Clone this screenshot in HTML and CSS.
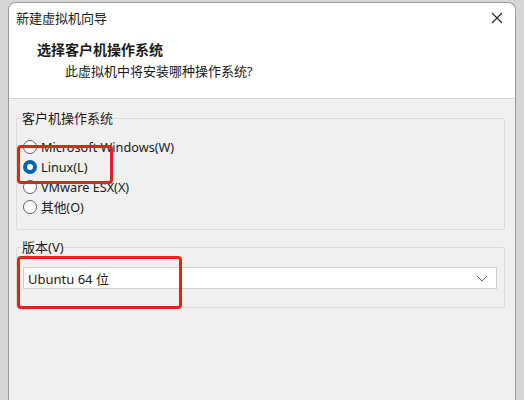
FILE: index.html
```html
<!DOCTYPE html>
<html lang="zh-CN">
<head>
    <meta charset="UTF-8">
    <meta name="viewport" content="width=device-width, initial-scale=1.0">
    <title>新建虚拟机向导</title>
    <link rel="stylesheet" href="styles.css">
</head>
<body>
    <div class="window">
        <div class="header">
            <div class="titlebar">
                <span class="title">新建虚拟机向导</span>
                <svg class="close" width="12" height="12" viewBox="0 0 12 12">
                    <path d="M1 1 L11 11 M11 1 L1 11" stroke="#222" stroke-width="1.1" fill="none"/>
                </svg>
            </div>
            <div class="heading">选择客户机操作系统</div>
            <div class="subheading">此虚拟机中将安装哪种操作系统?</div>
        </div>

        <div class="content">
            <fieldset class="group group-os">
                <legend>客户机操作系统</legend>
                <label class="radio"><span class="dot"></span>Microsoft Windows(W)</label>
                <label class="radio"><span class="dot checked"></span>Linux(L)</label>
                <label class="radio"><span class="dot"></span>VMware ESX(X)</label>
                <label class="radio"><span class="dot"></span>其他(O)</label>
            </fieldset>

            <fieldset class="group group-version">
                <legend>版本(V)</legend>
                <div class="select">
                    <span>Ubuntu 64 位</span>
                    <svg width="12" height="7" viewBox="0 0 12 7">
                        <path d="M1 1 L6 6 L11 1" stroke="#666" stroke-width="1" fill="none"/>
                    </svg>
                </div>
            </fieldset>

            <!-- red highlight marks drawn over the dialog -->
            <div class="mark mark-linux"></div>
            <div class="mark mark-version"></div>
        </div>
    </div>
</body>
</html>
```

FILE: styles.css
```css
body {
    margin: 0;
    background-color: #d6d6d6;
    font-family: "Noto Sans", "Noto Sans CJK SC", sans-serif;
    font-size: 13px;
    color: #1a1a1a;
    overflow: hidden;
}
.window {
    margin: 2px 0 0 8px;
    width: 506px;
    height: 400px;
    border: 1px solid #9a9a9a;
    border-bottom: none;
    border-radius: 8px 8px 0 0;
    background-color: #f0f0f0;
    overflow: hidden;
}
.header {
    background-color: #fff;
    height: 95px;
    border-bottom: 1px solid #d5d5d5;
}
.titlebar {
    display: flex;
    justify-content: space-between;
    align-items: center;
    height: 30px;
    padding: 0 12px 0 7px;
}
.title {
    font-size: 13px;
    line-height: 30px;
}
.close {
    display: block;
}
.heading {
    margin: 7px 0 0 28px;
    font-size: 14px;
    font-weight: bold;
    line-height: 20px;
}
.subheading {
    margin: 1px 0 0 56px;
    font-size: 13px;
    line-height: 20px;
}
.content {
    position: relative;
    padding: 11px 0 0 7px;
}
.group {
    width: 489px;
    box-sizing: border-box;
    margin: 0;
    border: 1px solid #dcdcdc;
    border-radius: 2px;
    padding: 0 0 0 6px;
}
.group legend {
    padding: 0;
    margin-left: -1px;
    font-size: 13px;
    line-height: 16px;
    color: #1a1a1a;
}
.group-os {
    height: 120px;
    padding-top: 11px;
}
.group-version {
    margin-top: 9px;
    height: 69px;
    padding-top: 12px;
}
.radio {
    display: flex;
    align-items: center;
    height: 20px;
    line-height: 20px;
    font-size: 12.7px;
    white-space: nowrap;
}
.dot {
    width: 14px;
    height: 14px;
    border: 1px solid #5f5f5f;
    border-radius: 50%;
    background-color: #fff;
    margin-right: 4px;
    box-sizing: border-box;
    flex: none;
}
.dot.checked {
    border: 4px solid #0063b1;
}
.select {
    display: flex;
    justify-content: space-between;
    align-items: center;
    width: 474px;
    height: 22px;
    box-sizing: border-box;
    border: 1px solid #cfcfcf;
    background-color: #fff;
    padding: 0 8px 0 4px;
}
.mark {
    position: absolute;
    border: 3px solid #e2231a;
    border-radius: 4px;
}
.mark-linux {
    left: 8px;
    top: 46px;
    width: 90px;
    height: 33px;
}
.mark-version {
    left: 8px;
    top: 157px;
    width: 159px;
    height: 47px;
}
```
